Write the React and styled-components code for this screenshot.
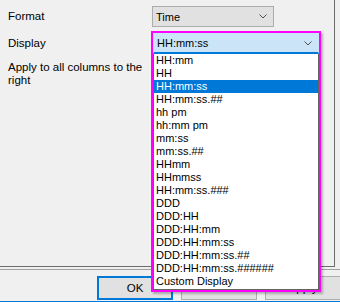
import React from 'react';
import styled, { createGlobalStyle } from 'styled-components';

const GlobalStyle = createGlobalStyle`
  html, body {
    margin: 0;
    padding: 0;
    background: #f0f0f0;
  }
  body {
    font-family: "Liberation Sans", Arial, sans-serif;
    color: #000;
  }
`;

const formats = [
  'HH:mm',
  'HH',
  'HH:mm:ss',
  'HH:mm:ss.##',
  'hh pm',
  'hh:mm pm',
  'mm:ss',
  'mm:ss.##',
  'HHmm',
  'HHmmss',
  'HH:mm:ss.###',
  'DDD',
  'DDD:HH',
  'DDD:HH:mm',
  'DDD:HH:mm:ss',
  'DDD:HH:mm:ss.##',
  'DDD:HH:mm:ss.######',
  'Custom Display',
];

const Chevron = () => (
  <svg width="8" height="5" viewBox="0 0 8 5">
    <polyline points="0.5,0.5 4,4 7.5,0.5" fill="none" stroke="#505050" strokeWidth="1" />
  </svg>
);

const App = () => {
  return (
    <Window>
      <GlobalStyle />
      <Panel>
        <Form>
          <Label>Format</Label>
          <Cell>
            <Combo width={122}>
              <span>Time</span>
              <Chevron />
            </Combo>
          </Cell>

          <Label>Display</Label>
          <Cell shift={1}>
            <Combo width={166} open>
              <span>HH:mm:ss</span>
              <Chevron />
            </Combo>
            <List>
              {formats.map((f) => (
                <Item key={f} selected={f === 'HH:mm:ss'}>
                  {f}
                </Item>
              ))}
            </List>
            <Highlight />
          </Cell>

          <Label wrap>Apply to all columns to the right</Label>
          <Cell />
        </Form>
      </Panel>
      <Separator />
      <Buttons>
        <Button primary>OK</Button>
        <Button>Cancel</Button>
        <Button>Apply</Button>
      </Buttons>
    </Window>
  );
};

export default App;

const Window = styled.div`
  width: 340px;
  height: 302px;
  box-sizing: border-box;
  border-bottom: 1px solid #0078d7;
  display: flex;
  flex-direction: column;
  overflow: hidden;
  font-size: 11.5px;
`;

const Panel = styled.div`
  width: 335px;
  height: 267px;
  box-sizing: border-box;
  border-right: 1px solid #6d6d6d;
  border-bottom: 1px solid #6d6d6d;
  flex-shrink: 0;
`;

const Form = styled.div`
  display: grid;
  grid-template-columns: 144px 1fr;
  row-gap: 6px;
  padding: 6px 0 0 8px;
`;

const Label = styled.div`
  display: flex;
  align-items: ${(p) => (p.wrap ? 'flex-start' : 'center')};
  line-height: 13px;
  padding-top: ${(p) => (p.wrap ? '1px' : '0')};
  padding-right: 4px;
`;

const Cell = styled.div`
  position: relative;
  padding-left: ${(p) => p.shift || 0}px;
  min-height: 21px;
`;

const Combo = styled.div`
  width: ${(p) => p.width}px;
  height: 21px;
  box-sizing: border-box;
  display: flex;
  align-items: center;
  justify-content: space-between;
  padding: 0 6px 0 3px;
  font-size: 11px;
  background: ${(p) => (p.open ? '#cce4f7' : '#e1e1e1')};
  border: 1px solid ${(p) => (p.open ? '#cce4f7' : '#adadad')};
  border-bottom: ${(p) => (p.open ? '2px solid #0078d7' : '1px solid #adadad')};
`;

const List = styled.div`
  position: absolute;
  top: 21px;
  left: 1px;
  width: 166px;
  box-sizing: border-box;
  background: #fff;
  border: 1px solid #646464;
  border-top: none;
  padding-bottom: 1px;
  z-index: 2;
`;

const Item = styled.div`
  height: 13px;
  line-height: 13px;
  padding-left: 2px;
  font-size: 11px;
  white-space: nowrap;
  background: ${(p) => (p.selected ? '#0078d7' : 'transparent')};
  color: ${(p) => (p.selected ? '#fff' : '#000')};
`;

const Highlight = styled.div`
  position: absolute;
  top: -2px;
  left: -1px;
  width: 170px;
  height: 261px;
  box-sizing: border-box;
  border: 2px solid #ff00ff;
  box-shadow: 2px 2px 2px rgba(0, 0, 0, 0.25);
  pointer-events: none;
  z-index: 3;
`;

const Separator = styled.div`
  height: 1px;
  margin-top: 2px;
  background: #a0a0a0;
  flex-shrink: 0;
`;

const Buttons = styled.div`
  display: flex;
  gap: 8px;
  padding: 6px 0 0 97px;
`;

const Button = styled.div`
  width: 76px;
  height: 24px;
  flex-shrink: 0;
  box-sizing: border-box;
  display: flex;
  align-items: center;
  justify-content: center;
  background: #e1e1e1;
  border: ${(p) => (p.primary ? '2px solid #0078d7' : '1px solid #adadad')};
`;
